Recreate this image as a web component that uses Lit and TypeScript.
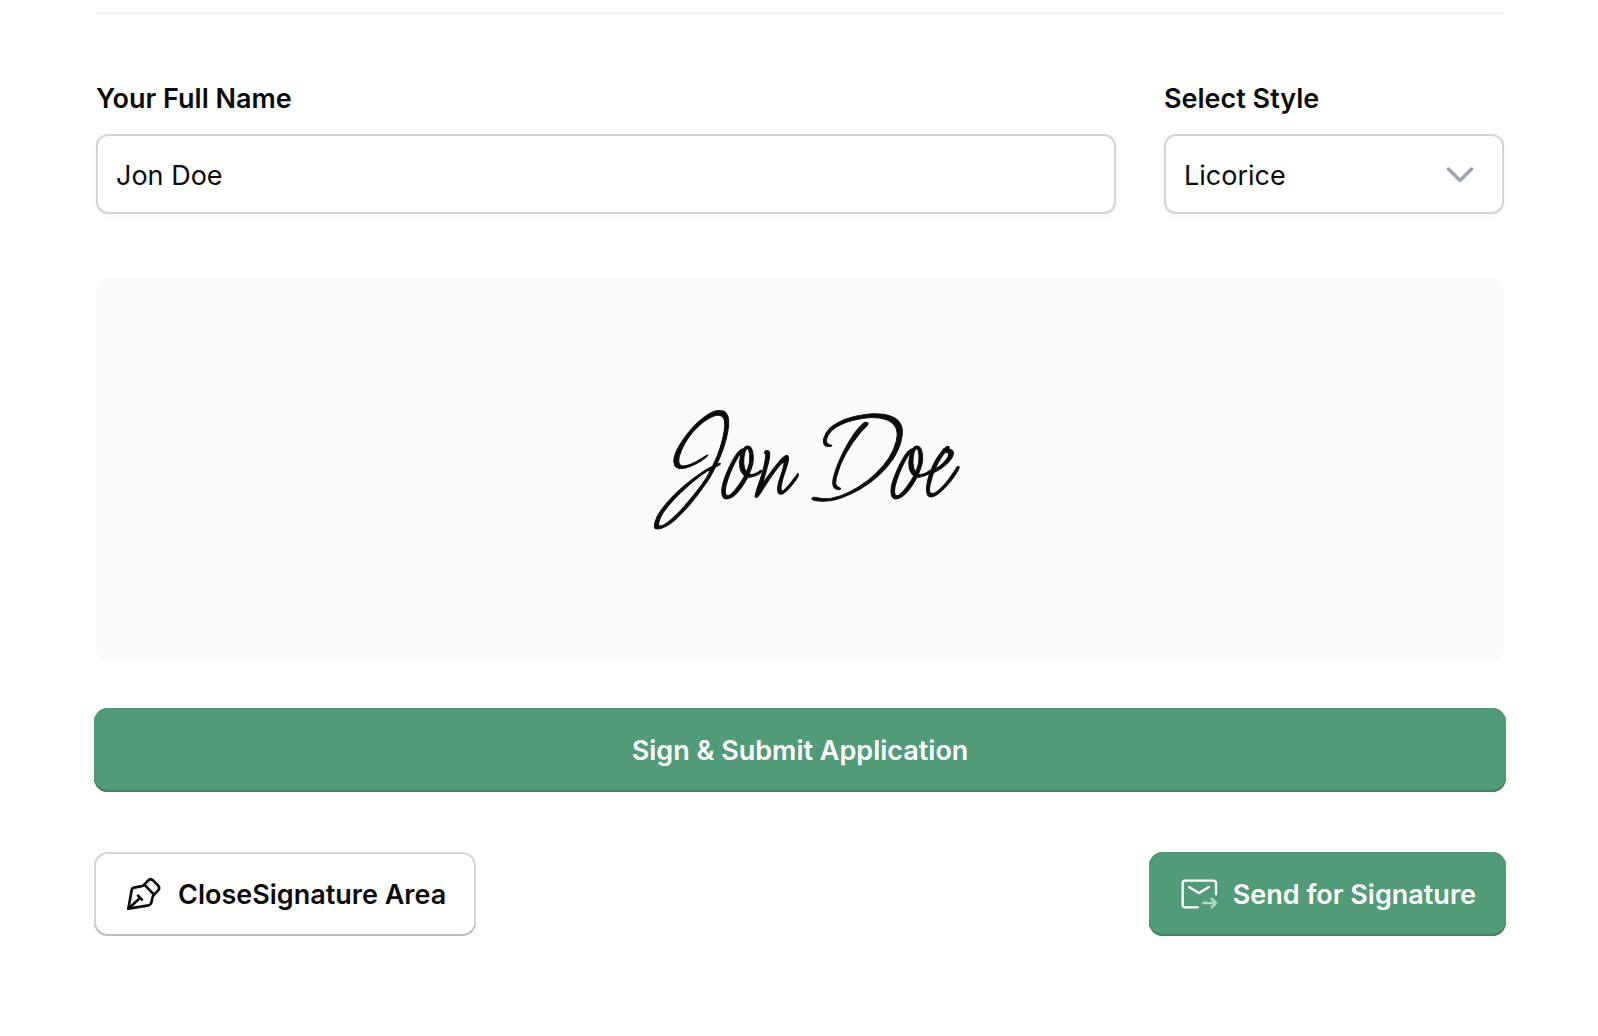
import { LitElement, html, css } from "lit";
import { customElement, state } from "lit/decorators.js";

@customElement("app-root")
export class AppRoot extends LitElement {
  @state() private fullName = "Jon Doe";

  static styles = css`
    :host {
      display: block;
      background: #ffffff;
      color: #0a0c0b;
      font-family: Inter, "Liberation Sans", sans-serif;
      font-size: 27px;
      line-height: 40px;
    }
    * {
      box-sizing: border-box;
    }
    .page {
      padding: 12px 94px 100px 96px;
    }
    .divider {
      height: 2px;
      margin: 0 0 65px;
      border: 0;
      background: #f1f2f4;
    }
    .fields {
      display: grid;
      grid-template-columns: 3fr 1fr;
      gap: 48px;
    }
    .field {
      display: flex;
      flex-direction: column;
      gap: 15px;
      min-width: 0;
    }
    .label {
      font-weight: 600;
    }
    .control {
      width: 100%;
      height: 80px;
      margin: 0;
      padding: 2px 18px 0;
      border: 2px solid #d1d5db;
      border-radius: 12px;
      background: #ffffff;
      box-shadow: 0 2px 4px rgba(0, 0, 0, 0.05);
      color: inherit;
      font: inherit;
      appearance: none;
    }
    .select-wrap {
      display: grid;
      align-items: center;
    }
    .select-wrap > * {
      grid-area: 1 / 1;
    }
    .select-wrap .control {
      padding-top: 4px;
    }
    .chevron {
      justify-self: end;
      width: 32px;
      height: 32px;
      margin-right: 28px;
      pointer-events: none;
    }
    .preview {
      display: flex;
      align-items: center;
      justify-content: center;
      min-height: 384px;
      margin: 64px 0 46px;
      border-radius: 12px;
      background: #f9fafc;
    }
    .signature {
      font-family: Licorice, "Liberation Serif", cursive;
      font-size: 120px;
      font-style: italic;
      line-height: 120px;
      -webkit-text-stroke: 1px currentColor;
    }
    .actions {
      display: flex;
      flex-wrap: wrap;
      justify-content: space-between;
      gap: 60px 24px;
      margin: 0 -2px;
    }
    .button {
      display: flex;
      align-items: center;
      justify-content: center;
      gap: 14px;
      height: 84px;
      padding: 0 30px;
      border: 0;
      border-radius: 14px;
      font: inherit;
      font-weight: 600;
      cursor: pointer;
    }
    .caption {
      padding-top: 2px;
    }
    .primary {
      background: #529b79;
      box-shadow: inset 0 -2px 0 #43825f, inset 0 0 0 2px #4f9875;
      color: #ffffff;
    }
    .outline {
      background: #ffffff;
      box-shadow: inset 0 -2px 0 #b9bdc3, inset 0 0 0 2px #d1d5db;
      color: inherit;
    }
    .wide {
      flex: 1 0 100%;
    }
    .icon {
      width: 40px;
      height: 40px;
      flex: none;
    }
    svg {
      fill: none;
      stroke: currentColor;
      stroke-linecap: round;
      stroke-linejoin: round;
    }
  `;

  private onName(event: Event) {
    this.fullName = (event.target as HTMLInputElement).value;
  }

  render() {
    return html`
      <main class="page">
        <hr class="divider" />
        <div class="fields">
          <div class="field">
            <label class="label" for="name">Your Full Name</label>
            <input class="control" id="name" type="text" .value=${this.fullName} @input=${this.onName} />
          </div>
          <div class="field">
            <label class="label" for="style">Select Style</label>
            <div class="select-wrap">
              <select class="control" id="style">
                <option selected>Licorice</option>
              </select>
              <svg class="chevron" viewBox="0 0 32 32" aria-hidden="true">
                <path d="M4.500 11L16 22.500L27.500 11" stroke="#9ca3af" stroke-width="3.500" />
              </svg>
            </div>
          </div>
        </div>
        <div class="preview"><span class="signature">${this.fullName}</span></div>
        <div class="actions">
          <button class="button primary wide" type="button">
            <span class="caption">Sign &amp; Submit Application</span>
          </button>
          <button class="button outline" type="button">
            <svg class="icon" viewBox="12 12 120 120" stroke-width="8" aria-hidden="true">
              <path d="M25 116L35 60Q36 54 42 53L62 49Q68 48 73 44L102 74Q98 78 97 84L94 98Q92 105 86 106Z" />
              <path d="M73 44L84 32Q91 24 99 31L114 46Q121 54 114 62L102 74" />
              <path d="M25 116L60 84M54 77L66 89" />
            </svg>
            <span class="caption">CloseSignature Area</span>
          </button>
          <button class="button primary" type="button">
            <svg class="icon" viewBox="21 12 120 120" stroke-width="7" aria-hidden="true">
              <path d="M132 73V40Q132 32 124 32H40Q32 32 32 40V104Q32 112 40 112H77" />
              <path d="M51 51L77 67Q81 70 85 67L111 51" />
              <path d="M94 99H131M119 86L132 99L119 112" opacity="0.6" />
            </svg>
            <span class="caption">Send for Signature</span>
          </button>
        </div>
      </main>
    `;
  }
}
